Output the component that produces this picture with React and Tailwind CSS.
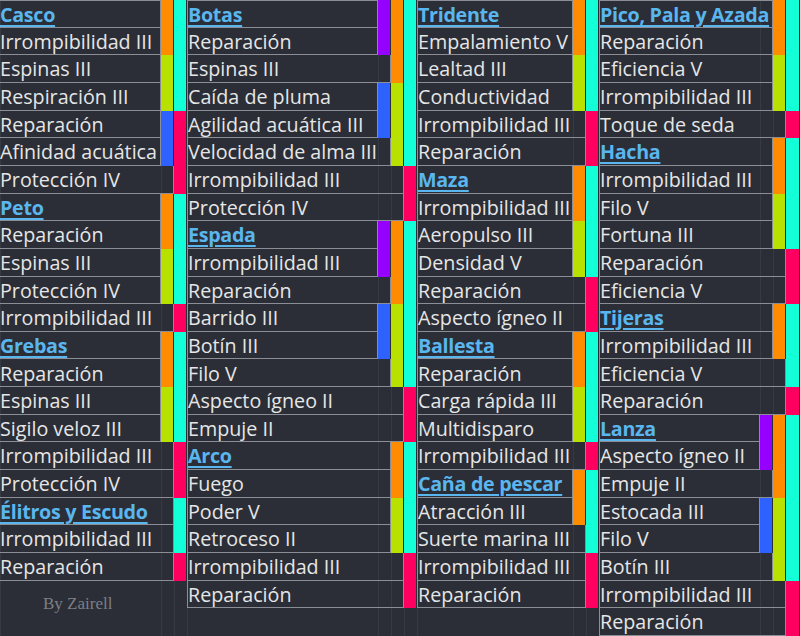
import React from 'react';

// literal class lookups so every grid class exists in the source
const ROW = [
  'row-start-1', 'row-start-2', 'row-start-3', 'row-start-4', 'row-start-5', 'row-start-6',
  'row-start-7', 'row-start-8', 'row-start-9', 'row-start-10', 'row-start-11', 'row-start-12',
  'row-start-13', 'row-start-14', 'row-start-15', 'row-start-16', 'row-start-17', 'row-start-18',
  'row-start-19', 'row-start-20', 'row-start-21', 'row-start-22', 'row-start-23',
];
const RSPAN = [null, 'row-span-1', 'row-span-2', 'row-span-3', 'row-span-4', 'row-span-5', 'row-span-6'];
const COL = [null, 'col-start-1', 'col-start-2', 'col-start-3', 'col-start-4'];
const CSPAN = [null, 'col-span-1', 'col-span-2', 'col-span-3', 'col-span-4'];

const COLORS = {
  o: 'bg-[#ff8c00]',
  l: 'bg-[#b9e100]',
  c: 'bg-[#12ffd8]',
  p: 'bg-[#ff0060]',
  b: 'bg-[#2e62ff]',
  v: 'bg-[#9600ff]',
};

const blocks = [
  {
    cols: 'grid-cols-[161px_13px_13px]',
    n: 3,
    edge: false,
    note: true,
    rows: [
      { h: 'Casco' }, 'Irrompibilidad III', 'Espinas III', 'Respiración III', 'Reparación',
      'Afinidad acuática', 'Protección IV', { h: 'Peto' }, 'Reparación', 'Espinas III',
      'Protección IV', 'Irrompibilidad III', { h: 'Grebas' }, 'Reparación', 'Espinas III',
      'Sigilo veloz III', 'Irrompibilidad III', 'Protección IV', { h: 'Élitros y Escudo' },
      'Irrompibilidad III', 'Reparación',
    ],
    bars: [
      [2, 0, 2, 'o'], [2, 2, 2, 'l'], [2, 4, 2, 'b'], [2, 7, 2, 'o'], [2, 9, 2, 'l'],
      [2, 12, 2, 'o'], [2, 14, 2, 'l'],
      [3, 0, 4, 'c'], [3, 4, 3, 'p'], [3, 7, 4, 'c'], [3, 11, 1, 'p'], [3, 12, 4, 'c'],
      [3, 16, 2, 'p'], [3, 18, 2, 'c'], [3, 20, 1, 'p'],
    ],
  },
  {
    cols: 'grid-cols-[191px_13px_13px_13px]',
    n: 4,
    edge: true,
    rows: [
      { h: 'Botas' }, 'Reparación', 'Espinas III', 'Caída de pluma', 'Agilidad acuática III',
      'Velocidad de alma III', 'Irrompibilidad III', 'Protección IV', { h: 'Espada' },
      'Irrompibilidad III', 'Reparación', 'Barrido III', 'Botín III', 'Filo V',
      'Aspecto ígneo II', 'Empuje II', { h: 'Arco' }, 'Fuego', 'Poder V', 'Retroceso II',
      'Irrompibilidad III', 'Reparación',
    ],
    bars: [
      [2, 0, 2, 'v'], [2, 3, 2, 'b'], [2, 8, 2, 'v'], [2, 11, 2, 'b'],
      [3, 0, 3, 'o'], [3, 3, 3, 'l'], [3, 8, 3, 'o'], [3, 11, 3, 'l'], [3, 16, 2, 'o'], [3, 18, 2, 'l'],
      [4, 0, 6, 'c'], [4, 6, 2, 'p'], [4, 8, 6, 'c'], [4, 14, 2, 'p'], [4, 16, 4, 'c'], [4, 20, 2, 'p'],
    ],
  },
  {
    cols: 'grid-cols-[156px_13px_13px]',
    n: 3,
    edge: true,
    rows: [
      { h: 'Tridente' }, 'Empalamiento V', 'Lealtad III', 'Conductividad', 'Irrompibilidad III',
      'Reparación', { h: 'Maza' }, 'Irrompibilidad III', 'Aeropulso III', 'Densidad V',
      'Reparación', 'Aspecto ígneo II', { h: 'Ballesta' }, 'Reparación', 'Carga rápida III',
      'Multidisparo', 'Irrompibilidad III', { h: 'Caña de pescar' }, 'Atracción III',
      'Suerte marina III', 'Irrompibilidad III', 'Reparación',
    ],
    bars: [
      [2, 0, 2, 'o'], [2, 2, 2, 'l'], [2, 6, 2, 'o'], [2, 8, 2, 'l'], [2, 12, 2, 'o'],
      [2, 14, 2, 'l'], [2, 17, 2, 'o'],
      [3, 0, 4, 'c'], [3, 4, 2, 'p'], [3, 6, 4, 'c'], [3, 10, 2, 'p'], [3, 12, 4, 'c'],
      [3, 16, 1, 'p'], [3, 17, 3, 'c'], [3, 20, 2, 'p'],
    ],
  },
  {
    cols: 'grid-cols-[161px_13px_13px_14px]',
    n: 4,
    edge: true,
    rows: [
      { h: 'Pico, Pala y Azada' }, 'Reparación', 'Eficiencia V', 'Irrompibilidad III',
      'Toque de seda', { h: 'Hacha' }, 'Irrompibilidad III', 'Filo V', 'Fortuna III',
      'Reparación', 'Eficiencia V', { h: 'Tijeras' }, 'Irrompibilidad III', 'Eficiencia V',
      'Reparación', { h: 'Lanza' }, 'Aspecto ígneo II', 'Empuje II', 'Estocada III', 'Filo V',
      'Botín III', 'Irrompibilidad III', 'Reparación',
    ],
    bars: [
      [2, 15, 2, 'v'], [2, 18, 2, 'b'],
      [3, 0, 2, 'o'], [3, 2, 2, 'l'], [3, 5, 2, 'o'], [3, 7, 2, 'l'], [3, 11, 2, 'o'],
      [3, 15, 3, 'o'], [3, 18, 3, 'l'],
      [4, 0, 4, 'c'], [4, 4, 1, 'p'], [4, 5, 4, 'c'], [4, 9, 2, 'p'], [4, 11, 3, 'c'],
      [4, 14, 1, 'p'], [4, 15, 6, 'c'], [4, 21, 2, 'p'],
    ],
  },
];

const Block = ({ block }) => {
  const taken = new Set();
  block.bars.forEach(([c, r, s]) => {
    for (let i = r; i < r + s; i++) taken.add(`${c}:${i}`);
  });

  // text spills over the empty slots to its right, as in the sheet
  const spanOf = (r) => {
    let span = 1;
    for (let c = 2; c <= block.n; c++) {
      if (taken.has(`${c}:${r}`)) break;
      span++;
    }
    return span;
  };

  return (
    <div className={`grid ${block.cols} grid-rows-[repeat(23,minmax(0,1fr))] h-full`}>
      {Array.from({ length: block.n }, (_, i) => (
        <div key={`g${i}`} className={`${COL[i + 1]} row-start-1 row-span-23 border-l border-[#363a43]`} />
      ))}

      {block.bars.map(([c, r, s, color], i) => (
        <div
          key={`b${i}`}
          className={`${COL[c]} ${ROW[r]} ${RSPAN[s]} ${COLORS[color]} border-r border-[#2b2e36]`}
        />
      ))}

      {block.rows.map((item, r) => {
        const head = typeof item === 'object';
        return (
          <div
            key={`t${r}`}
            className={`col-start-1 ${CSPAN[spanOf(r)]} ${ROW[r]} flex items-center pt-px whitespace-nowrap border-b border-r border-[#8b8e94] ${r === 0 ? 'border-t' : ''} ${block.edge ? 'border-l' : ''}`}
          >
            {head ? (
              <span className="font-bold tracking-[-0.3px] text-[#5ab6ee] underline decoration-[1.5px] underline-offset-[3px]">
                {item.h}
              </span>
            ) : (
              <span>{item}</span>
            )}
          </div>
        );
      })}

      {block.note && (
        <div className="col-start-1 col-span-3 row-start-22 row-span-2 pl-[43px] pt-[14px] font-['Liberation_Serif',serif] text-[17px] leading-none text-[#7c7f86]">
          By Zairell
        </div>
      )}
    </div>
  );
}

export default function App() {
  return (
    <div className="flex w-[800px] h-[636px] overflow-hidden bg-[#2b2e36] text-[#e6e6e6] font-['Open_Sans',sans-serif] text-[19.7px]">
      {blocks.map((block, i) => (
        <Block key={i} block={block} />
      ))}
    </div>
  );
}
